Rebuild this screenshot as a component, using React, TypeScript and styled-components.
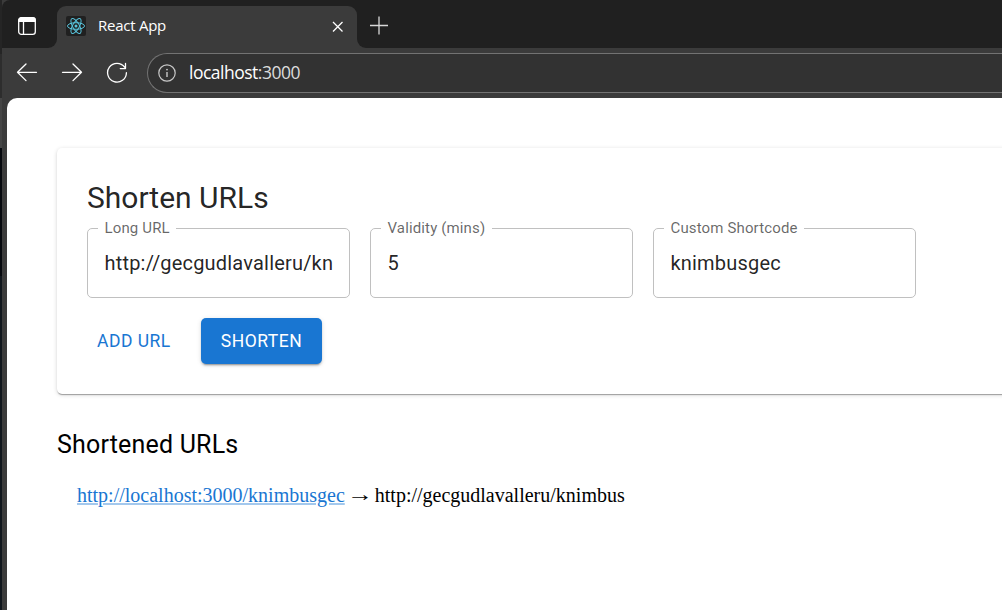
import React from "react";
import styled, { createGlobalStyle } from "styled-components";

const GlobalStyle = createGlobalStyle`
  * { box-sizing: border-box; }
  html, body { margin: 0; padding: 0; overflow: hidden; background: #3b3b3b; }
  h1, h2 { margin: 0; }
`;

const Desktop = styled.div`
  display: flex;
  width: 1002px;
  height: 610px;
  overflow: hidden;
`;

const Backdrop = styled.div`
  flex: 0 0 2px;
  background: linear-gradient(#252525 0 54px, #2d2d2d 54px 98px, #454545 98px 148px, #05080d 148px 276px, #10161c 276px);
`;

const Browser = styled.div`
  flex: 1;
  min-width: 0;
  display: flex;
  flex-direction: column;
  background: #3b3b3b;
  font-family: "Open Sans", "Noto Sans", sans-serif;
  color: #fff;
`;

const TabStrip = styled.div`
  display: flex;
  height: 48px;
  flex: none;
`;

const StripStart = styled.div`
  width: 55px;
  padding: 16px 0 0 15px;
  background: #202020;
  border-radius: 8px 0 9px 0;
`;

const StripTop = styled.div`
  background: #202020;
  padding-top: 6px;
`;

const Tab = styled.div`
  display: flex;
  align-items: center;
  width: 300px;
  height: 42px;
  padding: 0 13px 2px 9px;
  background: #3b3b3b;
  border-radius: 9px 9px 0 0;
`;

const Favicon = styled.span`
  display: flex;
  width: 20px;
  height: 20px;
  background: #202020;
  border-radius: 2px;
`;

const TabTitle = styled.span`
  flex: 1;
  margin-left: 12px;
  padding-bottom: 2px;
  font-size: 15px;
  letter-spacing: -0.25px;
  line-height: 20px;
`;

const StripEnd = styled.div`
  flex: 1;
  padding: 16px 0 0 12px;
  background: #202020;
  border-radius: 0 0 0 9px;
`;

const Toolbar = styled.div`
  display: flex;
  align-items: flex-start;
  height: 50px;
  flex: none;
  padding-top: 5px;
`;

const NavButtons = styled.div`
  display: flex;
  align-items: center;
  height: 38px;
  gap: 23px;
  width: 145px;
  padding-left: 14px;
`;

const AddressBar = styled.div`
  flex: 1;
  display: flex;
  align-items: center;
  height: 40px;
  padding-left: 10px;
  background: #323232;
  border: 1px solid #737373;
  border-right: 0;
  border-radius: 20px 0 0 20px;
`;

const Address = styled.span`
  margin-left: 13px;
  padding-bottom: 2px;
  font-size: 17.5px;
  letter-spacing: -0.5px;
  line-height: 24px;
`;

const Port = styled.span`
  color: #dcdcdc;
`;

const Page = styled.main`
  flex: 1;
  margin-left: 5px;
  padding: 50px 0 0 50px;
  background: #fff;
  border-radius: 10px 0 0 0;
  overflow: hidden;
  color: #000;
  font-family: Roboto, sans-serif;
`;

const Card = styled.section`
  width: 1100px;
  height: 246px;
  padding: 30px;
  border-radius: 5px;
  box-shadow: 0 2px 1px -1px rgba(0, 0, 0, 0.2), 0 1px 1px rgba(0, 0, 0, 0.14), 0 1px 4px rgba(0, 0, 0, 0.16);
  color: rgba(0, 0, 0, 0.87);
`;

const Title = styled.h1`
  font-size: 30px;
  font-weight: 400;
  line-height: 40px;
`;

const Fields = styled.div`
  display: flex;
  gap: 20px;
  padding-top: 1px;
`;

const FieldBox = styled.fieldset`
  flex: none;
  min-width: 0;
  width: 263px;
  height: 79px;
  margin: 0;
  padding: 0 16px;
  border: 1px solid #c0c0c0;
  border-radius: 5px;
`;

const FieldLabel = styled.legend`
  margin-left: -6px;
  padding: 0 6.5px;
  font-size: 15px;
  letter-spacing: 0.14px;
  line-height: 18px;
  color: rgba(0, 0, 0, 0.6);
`;

const FieldValue = styled.div`
  padding: 12px 0 0 0.5px;
  overflow: hidden;
  white-space: nowrap;
  font-size: 20px;
  letter-spacing: 0.19px;
  line-height: 29px;
`;

const Actions = styled.div`
  display: flex;
  gap: 20px;
  margin-top: 20px;
`;

const Button = styled.button<{ $filled?: boolean }>`
  height: 46px;
  padding: 0 ${(p) => (p.$filled ? 20 : 10)}px;
  border: 0;
  border-radius: 5px;
  background: ${(p) => (p.$filled ? "#1976d2" : "transparent")};
  color: ${(p) => (p.$filled ? "#fff" : "#1976d2")};
  box-shadow: ${(p) =>
    p.$filled
      ? "0 3px 1px -2px rgba(0,0,0,.2), 0 2px 2px rgba(0,0,0,.14), 0 1px 5px rgba(0,0,0,.12)"
      : "none"};
  font: ${(p) => (p.$filled ? 450 : 400)} 17.5px Roboto, sans-serif;
  letter-spacing: 0.5px;
  text-transform: uppercase;
`;

const Subtitle = styled.h2`
  margin-top: 31px;
  font-size: 25px;
  font-weight: 400;
  letter-spacing: 0.19px;
  line-height: 40px;
`;

const Result = styled.div`
  padding: 19px 0 0 20px;
  font: 20px/23px "Liberation Serif", serif;
`;

const Arrow = styled.span`
  display: inline-block;
  transform: translateY(-1px) scaleX(1.3);
`;

const ShortLink = styled.a`
  color: #1976d2;
  text-decoration: underline rgba(25, 118, 210, 0.4);
`;

function Field({ label, value }: { label: string; value: string }) {
  return (
    <FieldBox>
      <FieldLabel>{label}</FieldLabel>
      <FieldValue>{value}</FieldValue>
    </FieldBox>
  );
}

const TabActionsIcon = () => (
  <svg width="20" height="20" viewBox="0 0 20 20" fill="none" stroke="#fff" strokeWidth="1.3">
    <rect x="1.7" y="1.7" width="16.6" height="16.6" rx="2.6" />
    <path d="M2 4.5V4a2 2 0 0 1 2-2h12a2 2 0 0 1 2 2v1.4H2z" fill="#fff" />
    <path d="M6.5 6v12" />
  </svg>
);

const ReactLogo = () => (
  <svg width="20" height="20" viewBox="0 0 20 20" fill="none" stroke="#58c4dc" strokeWidth="1">
    <ellipse cx="10" cy="10" rx="8.5" ry="3.3" />
    <ellipse cx="10" cy="10" rx="8.5" ry="3.3" transform="rotate(60 10 10)" />
    <ellipse cx="10" cy="10" rx="8.5" ry="3.3" transform="rotate(120 10 10)" />
    <circle cx="10" cy="10" r="1.5" fill="#58c4dc" stroke="none" />
  </svg>
);

const CloseIcon = () => (
  <svg width="13" height="13" viewBox="0 0 13 13" stroke="#fff" strokeWidth="1.3">
    <path d="M2 2 11.5 11.5M11.5 2 2 11.5" />
  </svg>
);

const PlusIcon = () => (
  <svg width="20" height="20" viewBox="0 0 20 20" stroke="#d8d8d8" strokeWidth="1.3">
    <path d="M1 9.5h18M10 .5v18" />
  </svg>
);

const ArrowIcon = ({ back }: { back?: boolean }) => (
  <svg width="22" height="22" viewBox="0 0 22 22" fill="none" stroke="#fff" strokeWidth="1.3" strokeLinecap="round" strokeLinejoin="round">
    <path d={back ? "M20.5 11.3H1.5M10 3 1.5 11.3l8.5 8.3" : "M1.5 11.3h19M12 3l8.5 8.3-8.5 8.3"} />
  </svg>
);

const ReloadIcon = () => (
  <svg width="22" height="22" viewBox="0 0 22 22" fill="none" stroke="#fff" strokeWidth="1.3" strokeLinecap="round" strokeLinejoin="round">
    <path d="M20.4 11.7A9.4 9.4 0 1 1 18.6 6.2M19.5 2.5v5.1h-5.2" />
  </svg>
);

const InfoIcon = () => (
  <svg width="18" height="18" viewBox="0 0 18 18" fill="none" stroke="#c8c8c8" strokeWidth="1.2">
    <circle cx="9" cy="9" r="8.2" />
    <path d="M9 8v5" strokeWidth="1.4" />
    <circle cx="9" cy="5.6" r=".9" fill="#c8c8c8" stroke="none" />
  </svg>
);

export default function App() {
  return (
    <>
      <GlobalStyle />
      <Desktop>
        <Backdrop />
        <Browser>
          <TabStrip>
            <StripStart><TabActionsIcon /></StripStart>
            <StripTop>
              <Tab>
                <Favicon><ReactLogo /></Favicon>
                <TabTitle>React App</TabTitle>
                <CloseIcon />
              </Tab>
            </StripTop>
            <StripEnd><PlusIcon /></StripEnd>
          </TabStrip>
          <Toolbar>
            <NavButtons>
              <ArrowIcon back />
              <ArrowIcon />
              <ReloadIcon />
            </NavButtons>
            <AddressBar>
              <InfoIcon />
              <Address>localhost<Port>:3000</Port></Address>
            </AddressBar>
          </Toolbar>
          <Page>
            <Card>
              <Title>Shorten URLs</Title>
              <Fields>
                <Field label="Long URL" value="http://gecgudlavalleru/kn" />
                <Field label="Validity (mins)" value="5" />
                <Field label="Custom Shortcode" value="knimbusgec" />
              </Fields>
              <Actions>
                <Button>Add URL</Button>
                <Button $filled>Shorten</Button>
              </Actions>
            </Card>
            <Subtitle>Shortened URLs</Subtitle>
            <Result>
              <ShortLink>http://localhost:3000/knimbusgec</ShortLink> <Arrow>→</Arrow> http://gecgudlavalleru/knimbus
            </Result>
          </Page>
        </Browser>
      </Desktop>
    </>
  );
}
